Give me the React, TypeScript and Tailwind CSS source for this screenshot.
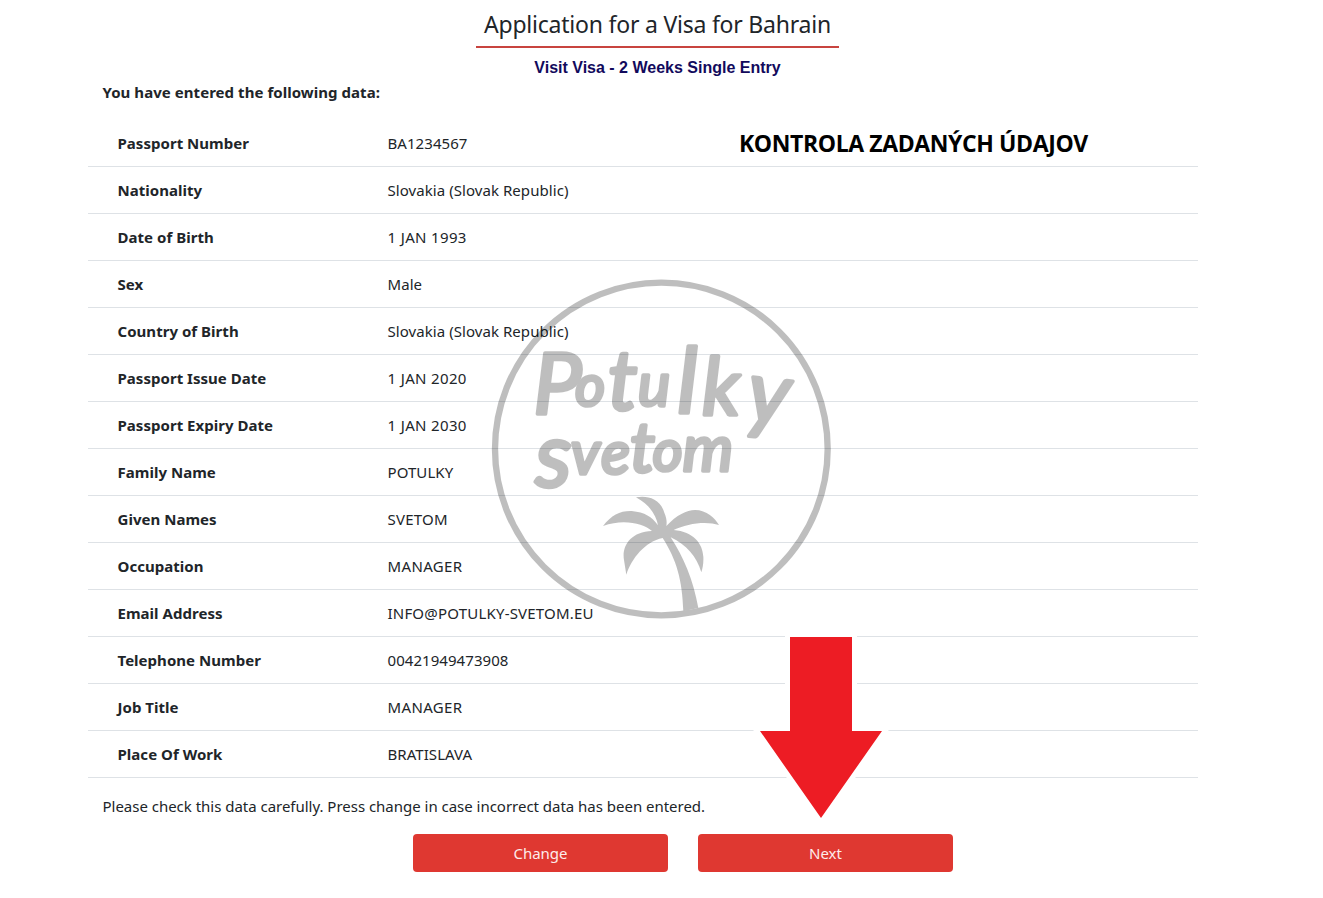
import React from 'react';

interface Entry {
  label: string;
  value: string;
  valueClass?: string;
}

const entries: Entry[] = [
  { label: 'Passport Number', value: 'BA1234567' },
  { label: 'Nationality', value: 'Slovakia (Slovak Republic)' },
  { label: 'Date of Birth', value: '1 JAN 1993', valueClass: 'tracking-[0.35px]' },
  { label: 'Sex', value: 'Male' },
  { label: 'Country of Birth', value: 'Slovakia (Slovak Republic)' },
  { label: 'Passport Issue Date', value: '1 JAN 2020', valueClass: 'tracking-[0.35px]' },
  { label: 'Passport Expiry Date', value: '1 JAN 2030', valueClass: 'tracking-[0.35px]' },
  { label: 'Family Name', value: 'POTULKY' },
  { label: 'Given Names', value: 'SVETOM', valueClass: 'tracking-[0.25px]' },
  { label: 'Occupation', value: 'MANAGER', valueClass: 'tracking-[0.35px]' },
  { label: 'Email Address', value: 'INFO@POTULKY-SVETOM.EU', valueClass: 'tracking-[0.2px]' },
  { label: 'Telephone Number', value: '00421949473908' },
  { label: 'Job Title', value: 'MANAGER', valueClass: 'tracking-[0.35px]' },
  { label: 'Place Of Work', value: 'BRATISLAVA' },
];

const DataRow: React.FC<Entry> = ({ label, value, valueClass = 'tracking-[0.06px]' }) => (
  <div className="flex h-[47px] items-center border-b border-[#dee2e6] pl-[29.5px]">
    <dt className="w-[270px] font-bold tracking-[0.03px]">{label}</dt>
    <dd className={valueClass}>{value}</dd>
  </div>
);

const ActionButton: React.FC<{ children: React.ReactNode }> = ({ children }) => (
  <button className="h-[38px] w-[255px] rounded bg-[#df3831] text-[#fdeceb]">{children}</button>
);

const Watermark: React.FC = () => (
  <svg
    className="pointer-events-none absolute top-[270px] left-[480px] h-[360px] w-[360px] opacity-25"
    viewBox="0 0 1080 1080"
  >
    <circle cx="544" cy="537" r="499" fill="none" stroke="black" strokeWidth="19" />
    <g
      className="font-['Lato',sans-serif] font-normal italic"
      stroke="black"
      strokeWidth="11"
      strokeLinejoin="round"
      strokeLinecap="round"
    >
      <text>
        <tspan x="160" y="432" fontSize="258">P</tspan>
        <tspan x="286" y="407" fontSize="172">o</tspan>
        <tspan x="384" y="420" fontSize="250">t</tspan>
        <tspan x="474" y="407" fontSize="182">u</tspan>
        <tspan x="592" y="430" fontSize="272">l</tspan>
        <tspan x="666" y="434" fontSize="240">k</tspan>
        <tspan x="796" y="452" fontSize="262" rotate="6">y</tspan>
      </text>
      <text>
        <tspan x="166" y="650" fontSize="275">s</tspan>
        <tspan x="272" y="611" fontSize="182">v</tspan>
        <tspan x="364" y="612" fontSize="180">e</tspan>
        <tspan x="450" y="607" fontSize="212">t</tspan>
        <tspan x="518" y="602" fontSize="172">o</tspan>
        <tspan x="608" y="602" fontSize="192">m</tspan>
      </text>
    </g>
    {/* Palm tree */}
    <path d="M468 682C500 676 540 684 553 728C560 745 561 755 559 768C590 735 620 720 645 720C680 720 705 745 717 765C680 752 620 760 581 780C640 785 668 820 670 860C671 880 668 895 664 907C650 860 620 825 572 802C610 860 640 930 655 1014L610 1024C607 930 590 870 548 804C495 815 455 865 439 914L432 870C425 830 450 785 516 783C490 760 430 745 369 768C395 735 420 722 455 723C495 727 515 740 534 766C528 735 510 705 468 682Z" />
  </svg>
);

const Arrow: React.FC = () => (
  <svg className="pointer-events-none absolute top-[630px] left-[750px] h-[195px] w-[142px]" viewBox="0 0 142 195">
    <path
      d="M40 7h62v94h30L71 188L10 101h30Z"
      fill="#ed1c24"
      stroke="white"
      strokeWidth="10"
      paintOrder="stroke"
    />
  </svg>
);

const App: React.FC = () => {
  return (
    <main className="relative h-[898px] overflow-hidden bg-white pl-[88px] font-['Noto_Sans','Open_Sans',sans-serif] text-[15px] leading-6 text-[#212529]">
      <div className="w-[1110px]">
        <header className="flex flex-col items-center pl-[29px]">
          <h1 className="h-12 w-[363px] border-b-2 border-[#c8443f] pt-2 text-center text-[23px] leading-8 tracking-[-0.22px] whitespace-nowrap">
            Application for a Visa for Bahrain
          </h1>
          <h2 className="mt-2 font-['Liberation_Sans',sans-serif] text-base font-bold text-[#120a5c]">
            Visit Visa - 2 Weeks Single Entry
          </h2>
        </header>
        <p className="pl-[14.5px] font-bold tracking-[0.05px]">You have entered the following data:</p>

        <dl className="relative mt-4">
          {entries.map((entry) => (
            <DataRow key={entry.label} {...entry} />
          ))}
          <p className="absolute top-[7px] left-[651px] font-['Open_Sans',sans-serif] text-[23px] leading-8 font-bold tracking-[-0.4px] whitespace-nowrap text-black">
            KONTROLA ZADANÝCH ÚDAJOV
          </p>
        </dl>

        <p className="mt-4 pl-[14.5px] tracking-[-0.02px]">
          Please check this data carefully. Press change in case incorrect data has been entered.
        </p>
        <div className="mt-4 flex gap-[30px] pl-[325px]">
          <ActionButton>Change</ActionButton>
          <ActionButton>Next</ActionButton>
        </div>
      </div>

      <Watermark />
      <Arrow />
    </main>
  );
};

export default App;
